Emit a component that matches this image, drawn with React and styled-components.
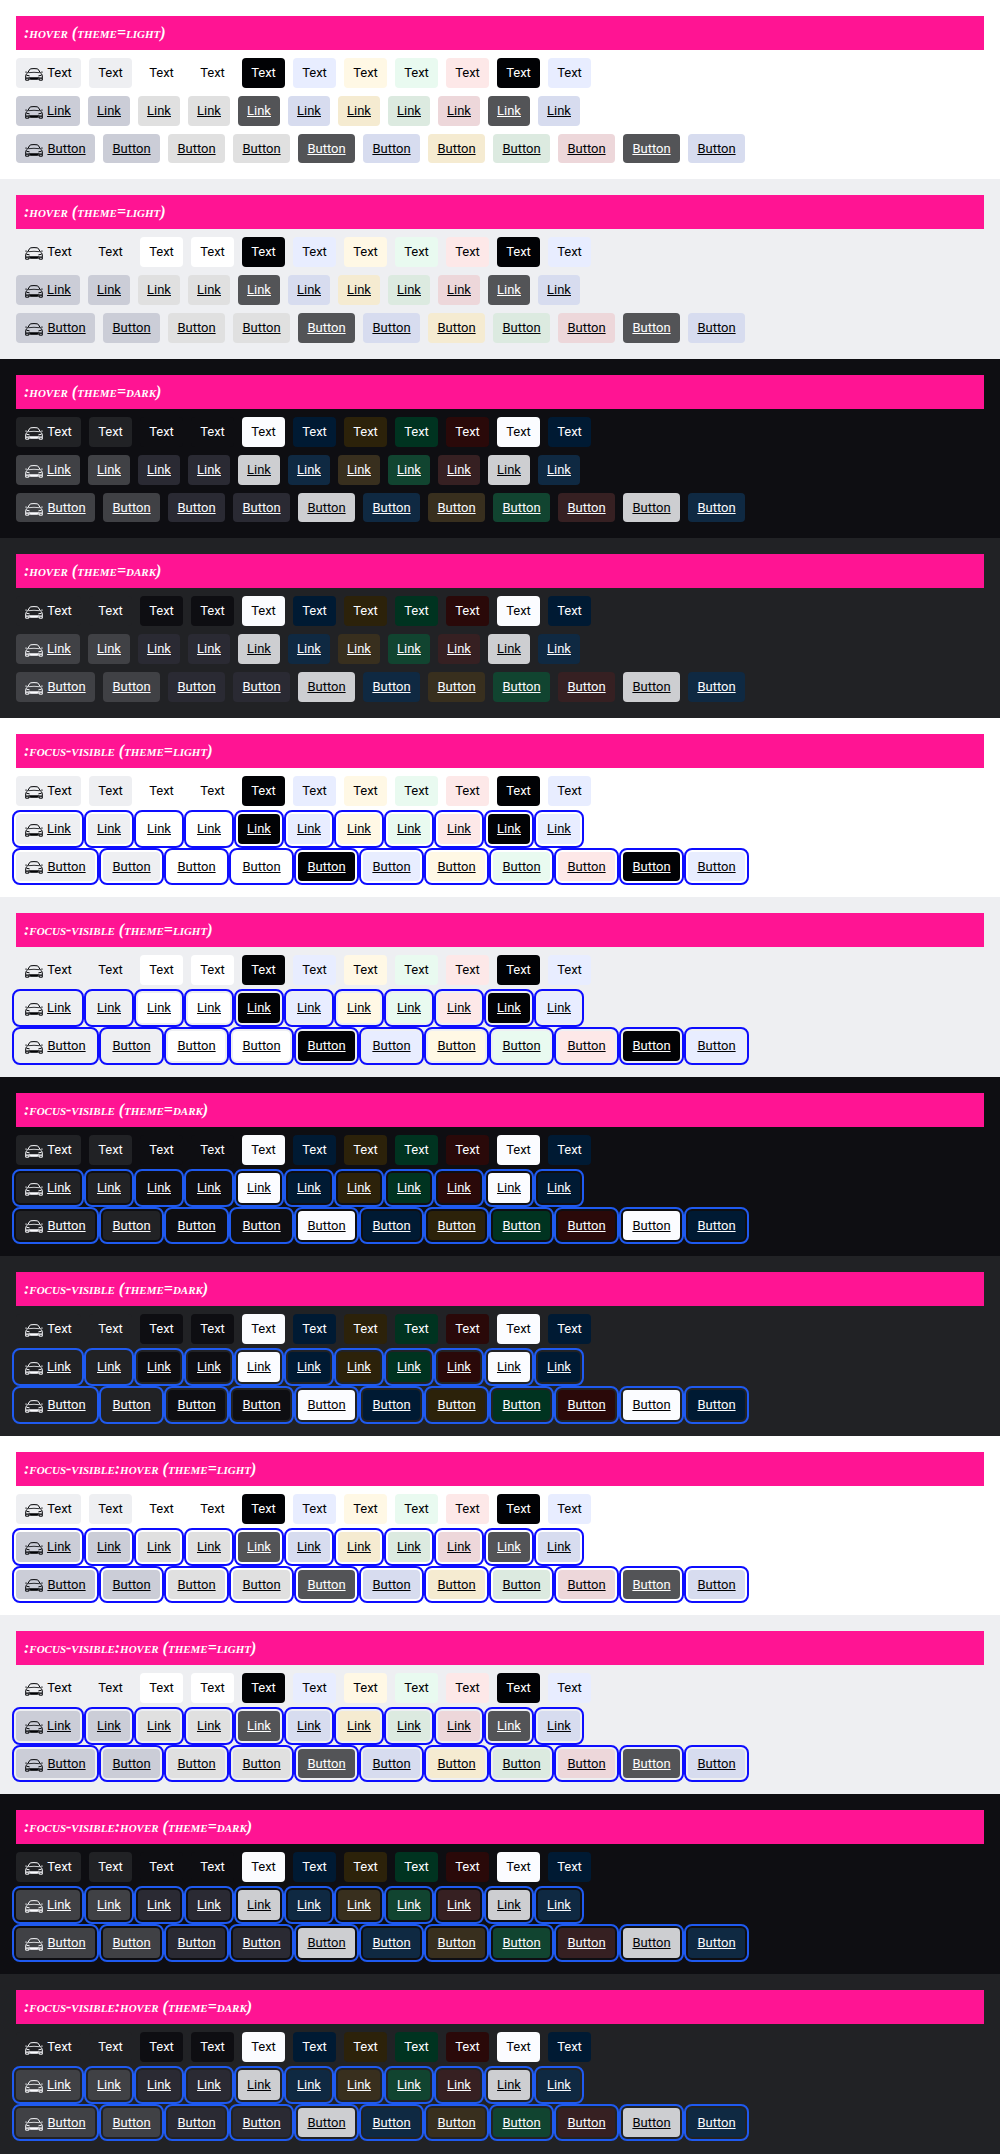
import React from 'react';
import styled, { createGlobalStyle, css } from 'styled-components';

const themes = {
  light: {
    base: '#ffffff', surface: '#eeeff2', text: '#010205', inverse: '#ffffff', focus: '#0d0dff',
    rest: {
      surface: '#eeeff2', base: '#ffffff', primary: '#010205', info: '#e8edff',
      warning: '#fff8e5', success: '#e9faf0', error: '#fde8e8',
    },
    hover: {
      surface: '#cbcdd7', base: '#e0e0e0', primary: '#535457', info: '#d7dcef',
      warning: '#f5ebd1', success: '#dceae0', error: '#edd7da',
    },
  },
  dark: {
    base: '#0e0e12', surface: '#212225', text: '#fbfcff', inverse: '#010205', focus: '#1f5af0',
    rest: {
      surface: '#212225', base: '#0e0e12', primary: '#fbfcff', info: '#001a33',
      warning: '#2c220a', success: '#003320', error: '#2a0909',
    },
    hover: {
      surface: '#404145', base: '#2a2a33', primary: '#cdced1', info: '#0f2942',
      warning: '#382f1e', success: '#114430', error: '#362022',
    },
  },
};

const tones = ['surface', 'surface', 'base', 'base', 'primary', 'info', 'warning', 'success', 'error', 'primary', 'info'];

const labelWidths = { Text: '25px', Link: '24px', Button: '39px' };

const GlobalStyle = createGlobalStyle`
  *, *::before, *::after { box-sizing: border-box; }
  body { margin: 0; }
`;

const Page = styled.main`
  display: flex;
  flex-direction: column;
  min-height: 100vh;
`;

const Section = styled.section`
  display: flex;
  flex-direction: column;
  gap: 8px;
  padding: 16px;
  background: ${(p) => p.$background};

  &:last-child { flex: 1 0 auto; }
`;

const Heading = styled.h2`
  margin: 0;
  padding: 8px;
  background: deeppink;
  color: #fff;
  font: italic small-caps bold 16px/18px 'Liberation Serif', serif;
`;

const Row = styled.div`
  display: flex;
  flex-wrap: wrap;
  gap: 8px;
`;

const tag = css`
  display: inline-flex;
  align-items: center;
  justify-content: center;
  gap: 4px;
  margin: 0;
  padding: 4px 9px;
  border: 0;
  border-radius: 4px;
  background: ${(p) => p.$background};
  color: ${(p) => p.$color};
  font: 400 13px/22px Roboto, 'Liberation Sans', sans-serif;
`;

const action = css`
  ${tag}
  cursor: pointer;
  outline: ${(p) => (p.$ring ? `2px solid ${p.$ring}` : 'none')};
  outline-offset: 2px;
`;

const Label = styled.span`
  min-width: ${(p) => p.$width};
  text-align: center;
  text-decoration: ${(p) => (p.$underlined ? 'underline' : 'none')};
  text-underline-offset: 1px;
`;

const TextTag = styled.span`
  ${tag}
`;

const LinkTag = styled.a`
  ${action}
  text-decoration: none;
`;

const ButtonTag = styled.button`
  ${action}
  line-height: 1.65;
`;

const Icon = styled.svg`
  flex: none;
  width: 18px;
  height: 20px;
  fill: none;
  stroke: currentColor;
`;

function CarIcon() {
  return (
    <Icon viewBox="0 0 18 20" aria-hidden="true">
      <path d="M2.6 10 4.6 6.6Q5 5.9 6 5.8Q9 5.4 12 5.8Q13 5.9 13.4 6.6L15.4 10" />
      <path d="M3.4 9.7Q9 8.9 14.6 9.7" strokeWidth=".8" />
      <path d="M.2 9.1h1.8M16 9.1h1.8" strokeWidth=".8" />
      <path d="M2.6 10Q.8 11 .7 12.6v4.6h3v-1.1h10.6v1.1h3v-4.6q-.1-1.6-1.9-2.6" />
      <path d="M1.4 12.2 4.6 12.9M16.6 12.2 13.4 12.9" />
      <path d="M1 15.1h3.4M13.6 15.1H17M5 14.9h8l-1 1H6z" strokeWidth="1.2" />
    </Icon>
  );
}

function TagRow({ kind, theme, hover, focus }) {
  const interactive = kind !== 'Text';
  const palette = interactive && hover ? theme.hover : theme.rest;
  const ring = focus ? theme.focus : null;
  return (
    <Row>
      {tones.map((tone, i) => {
        const props = {
          $background: palette[tone],
          $color: tone === 'primary' ? theme.inverse : theme.text,
        };
        const content = (
          <>
            {i === 0 && <CarIcon />}
            <Label $underlined={interactive} $width={labelWidths[kind]}>{kind}</Label>
          </>
        );
        if (kind === 'Link') return <LinkTag key={i} href="#" $ring={ring} {...props}>{content}</LinkTag>;
        if (kind === 'Button') return <ButtonTag key={i} type="button" $ring={ring} {...props}>{content}</ButtonTag>;
        return <TextTag key={i} {...props}>{content}</TextTag>;
      })}
    </Row>
  );
}

const states = [
  { name: ':hover', hover: true, focus: false },
  { name: ':focus-visible', hover: false, focus: true },
  { name: ':focus-visible:hover', hover: true, focus: true },
];

export default function App() {
  return (
    <Page>
      <GlobalStyle />
      {states.map(({ name, hover, focus }) =>
        ['light', 'dark'].map((themeName) =>
          ['base', 'surface'].map((background) => {
            const theme = themes[themeName];
            return (
              <Section key={name + themeName + background} $background={theme[background]}>
                <Heading>{`${name} (theme=${themeName})`}</Heading>
                {['Text', 'Link', 'Button'].map((kind) => (
                  <TagRow key={kind} kind={kind} theme={theme} hover={hover} focus={focus} />
                ))}
              </Section>
            );
          })
        )
      )}
    </Page>
  );
}
